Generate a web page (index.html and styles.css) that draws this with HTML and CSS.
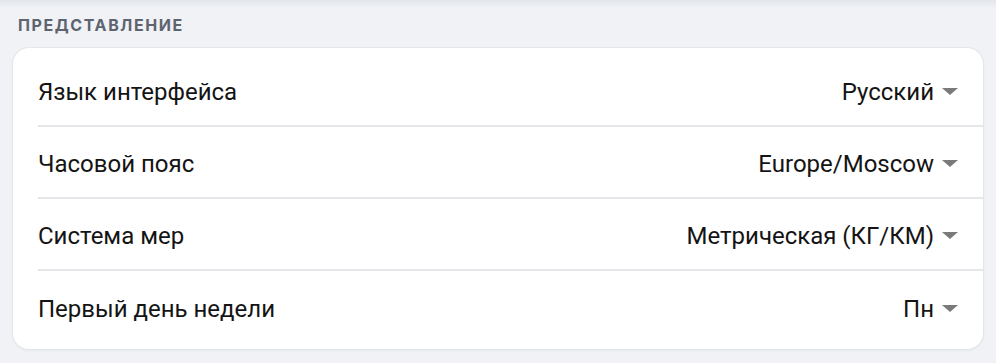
FILE: index.html
```html
<!DOCTYPE html>
<html lang="ru">
<head>
<meta charset="utf-8">
<link rel="stylesheet" href="styles.css">
</head>
<body>
<div class="page">
  <div class="section-title">ПРЕДСТАВЛЕНИЕ</div>
  <div class="card">
    <div class="row">
      <span class="label">Язык интерфейса</span>
      <span class="value">Русский<span class="caret"></span></span>
    </div>
    <div class="row">
      <span class="label">Часовой пояс</span>
      <span class="value">Europe/Moscow<span class="caret"></span></span>
    </div>
    <div class="row">
      <span class="label">Система мер</span>
      <span class="value">Метрическая (КГ/КМ)<span class="caret"></span></span>
    </div>
    <div class="row">
      <span class="label">Первый день недели</span>
      <span class="value">Пн<span class="caret"></span></span>
    </div>
  </div>
</div>
</body>
</html>
```
FILE: styles.css
```css
* { box-sizing: border-box; }
html, body { margin: 0; padding: 0; }
body {
  background: #f0f2f5;
  font-family: Roboto, "Noto Sans", sans-serif;
  width: 996px;
  height: 363px;
  overflow: hidden;
  position: relative;
}
body::before {
  content: "";
  position: absolute;
  left: 0; right: 0; top: 0;
  height: 8px;
  background: linear-gradient(#e2e5ea, rgba(240,242,245,0));
}
.page {
  padding: 13px 13px 0 13px;
}
.section-title {
  font-family: Inter, Roboto, sans-serif;
  font-size: 16px;
  font-weight: 700;
  letter-spacing: 1.6px;
  color: #5d6470;
  padding-left: 5px;
  height: 22px;
  line-height: 24px;
}
.card {
  margin-top: 13px;
  width: 970px;
  background: #fff;
  border-radius: 16px;
  box-shadow: 0 0 0 1px #e3e6ea, 0 1px 3px rgba(0,0,0,0.08);
  padding: 7px 0 6px 25px;
}
.row {
  height: 72px;
  display: flex;
  align-items: center;
  justify-content: space-between;
  padding: 3px 25px 0 0;
  border-bottom: 2px solid #e4e6e9;
  font-size: 24px;
  color: #141414;
}
.row:last-child { border-bottom: none; }
.value {
  display: flex;
  align-items: center;
}
.caret {
  width: 0; height: 0;
  margin-left: 8px;
  border-left: 8px solid transparent;
  border-right: 8px solid transparent;
  border-top: 7px solid #7a7a7a;
}
```
